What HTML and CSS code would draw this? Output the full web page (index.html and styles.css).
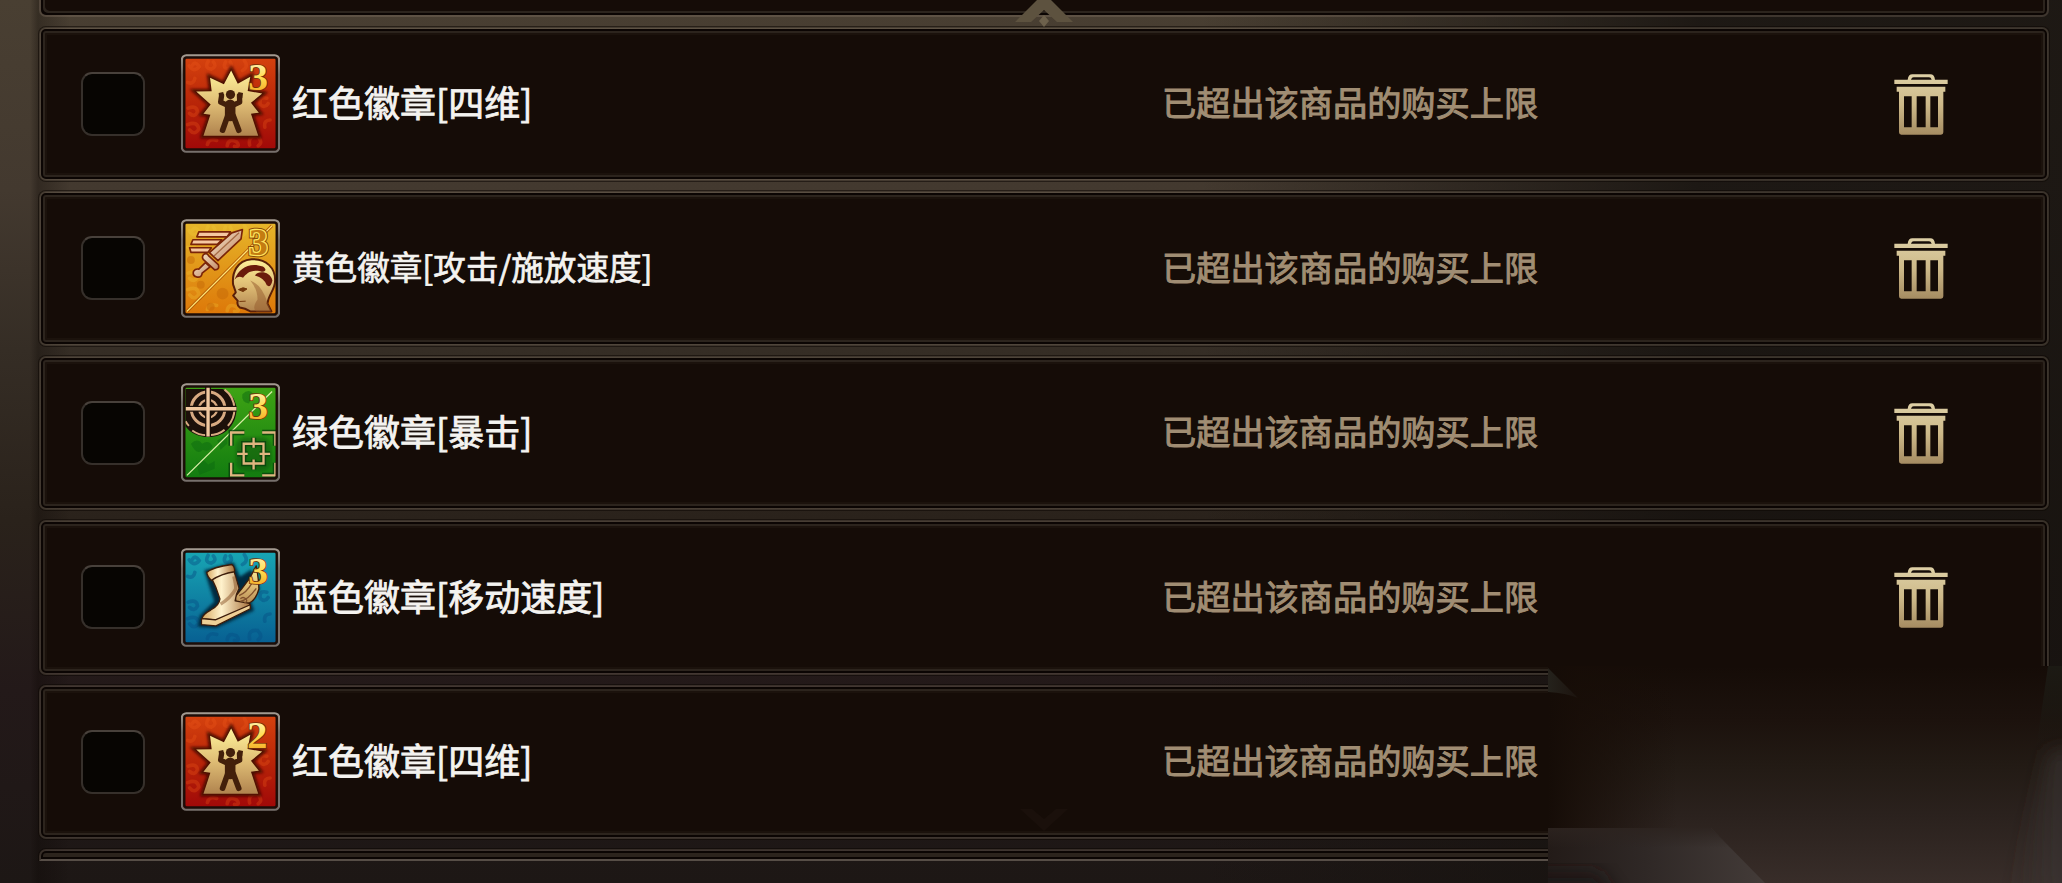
FILE: index.html
```html
<!DOCTYPE html>
<html lang="zh-CN">
<head>
<meta charset="utf-8">
<title>购物车</title>
<link rel="stylesheet" href="styles.css">
</head>
<body>
<svg class="defs" width="0" height="0" aria-hidden="true">
  <defs>
    <linearGradient id="gold" x1="0" y1="0" x2="0" y2="1"><stop offset="0" stop-color="#fff29a"/><stop offset=".5" stop-color="#dfbd75"/><stop offset="1" stop-color="#b0834e"/></linearGradient>
    <linearGradient id="digit" x1="0" y1="0" x2="0" y2="1"><stop offset="0" stop-color="#fff8d0"/><stop offset=".5" stop-color="#ffdc50"/><stop offset="1" stop-color="#f09a18"/></linearGradient>
    <linearGradient id="red" x1="0" y1="0" x2="0" y2="1"><stop offset="0" stop-color="#d5420e"/><stop offset=".5" stop-color="#b82508"/><stop offset="1" stop-color="#a00808"/></linearGradient>
    <linearGradient id="yellow" x1="0" y1="0" x2="0" y2="1"><stop offset="0" stop-color="#e6b62a"/><stop offset="1" stop-color="#dd7708"/></linearGradient>
    <linearGradient id="green" x1="0" y1="0" x2="0" y2="1"><stop offset="0" stop-color="#3fa414"/><stop offset="1" stop-color="#127c10"/></linearGradient>
    <linearGradient id="blue" x1="0" y1="0" x2="0" y2="1"><stop offset="0" stop-color="#18a6b4"/><stop offset="1" stop-color="#075f92"/></linearGradient>
    <linearGradient id="steel" x1="0" y1="0" x2="1" y2="1"><stop offset="0" stop-color="#fff3dc"/><stop offset="1" stop-color="#b87850"/></linearGradient>
    <linearGradient id="boot" x1="0" y1="0" x2="1" y2="0"><stop offset="0" stop-color="#d8a860"/><stop offset=".4" stop-color="#fff2cc"/><stop offset="1" stop-color="#a8713c"/></linearGradient>
    <linearGradient id="bin" x1="0" y1="0" x2="0" y2="1"><stop offset="0" stop-color="#ded0a6"/><stop offset=".5" stop-color="#cdb989"/><stop offset="1" stop-color="#a58c62"/></linearGradient>
    <linearGradient id="rim" x1="0" y1="0" x2="0" y2="1"><stop offset="0" stop-color="#a39a90"/><stop offset=".2" stop-color="#6d6762"/><stop offset="1" stop-color="#77706c"/></linearGradient>
    <filter id="soft" x="-20%" y="-20%" width="140%" height="140%"><feGaussianBlur stdDeviation="5"/></filter>

    <g id="swirls" fill="none" stroke-width="11" stroke-linecap="round">
      <path d="M55 62q14 22 30 2q-12-18-20-4M112 48q-12 22 10 24q18-8 6-22M165 50q-10 20 8 20q16-6 6-20M222 46q14 20-6 30M50 112q18 8 22-12M290 160q-24-6-20 18q14 14 24-2M52 190q26-10 28 12q-10 18-24 4M50 240q30-12 34 14q-14 20-28 2M110 300q6-20 28-12M170 304q4-24 28-12q14 16-6 14M238 302q-6-30 24-26q18 18 2 28M300 226q-20 0-16 22"/>
    </g>
    <g id="frame">
      <rect x="33" y="30" width="294" height="292" rx="13" fill="none" stroke="url(#rim)" stroke-width="7"/>
      <rect x="40" y="37" width="280" height="278" rx="7" fill="none" stroke="#1c0d08" stroke-width="7"/>
    </g>
    <g id="burst">
      <rect x="38" y="35" width="284" height="282" fill="url(#red)"/>
      <use href="#swirls" stroke="#ef5a1c" opacity=".3"/>
      <path d="M182 76L202 116L240 95L232 138L276 146L242 174L266 204L242 207L264 274H98L119 210L98 207L120 179L76 140L123 139L118 98L160 118Z" fill="#4a0802" stroke="#4a0802" stroke-width="16" filter="url(#soft)"/>
      <path d="M182 76L202 116L240 95L232 138L276 146L242 174L266 204L242 207L264 274H98L119 210L98 207L120 179L76 140L123 139L118 98L160 118Z" fill="url(#gold)"/>
      <g fill="none" stroke="#43200b" stroke-linecap="round" stroke-linejoin="round">
        <path d="M153 152L150 172L168 180M207 152L208 172L190 180" stroke-width="16"/>
        <path d="M179 180V214" stroke-width="32"/>
        <path d="M172 212L156 257M188 212L205 257" stroke-width="17"/>
      </g>
      <circle cx="180" cy="149" r="14" fill="#43200b"/>
      <path d="M144 144l14-3 2 16-14 3zM218 144l-14-3-2 16 14 3z" fill="#43200b"/>
    </g>
    <g id="trash">
      <path d="M203 240q2-16 14-16h54q12 0 14 16h-10q-2-7-8-7h-46q-6 0-8 7zM163 240h160v13H163zM170 261h146v15h-6v122q0 7-7 7H184q-7 0-7-7V276h-7zM192 290v93h23v-93zM230 290v93h27v-93zM271 290v93h23v-93z" fill="url(#bin)" fill-rule="evenodd"/>
    </g>
  </defs>
</svg>

<main class="screen">
  <section class="list">
    <article class="row row-cut"></article>

    <article class="row">
      <span class="check"></span>
      <svg class="badge" viewBox="30 27 300 298">
        <use href="#burst"/>
        <text class="num" x="234" y="136" textLength="60" lengthAdjust="spacingAndGlyphs">3</text>
        <use href="#frame"/>
      </svg>
      <h2 class="name">红色徽章[四维]</h2>
      <p class="note">已超出该商品的购买上限</p>
      <svg class="trash" viewBox="163 223 160 183"><use href="#trash"/></svg>
    </article>

    <article class="row">
      <span class="check"></span>
      <svg class="badge" viewBox="30 27 300 298">
        <rect x="38" y="35" width="284" height="282" fill="url(#yellow)"/>
        <use href="#swirls" stroke="#f5cf3c" opacity=".25"/>
        <g fill="#c66a08" opacity=".5"><circle cx="156" cy="252" r="18"/><circle cx="90" cy="225" r="12"/><circle cx="60" cy="150" r="12"/><circle cx="120" cy="292" r="12"/></g>
        <path d="M48 306L306 46" stroke="#b45a05" stroke-width="9"/>
        <path d="M48 306L306 46" stroke="#ffe878" stroke-width="4"/>
        <g stroke="#7a2408" stroke-width="5" stroke-linejoin="round">
          <path d="M84 65H180L170 80H78ZM66 89H154L140 103H60ZM56 113H122L112 127H60Z" fill="#f6c7a0"/>
          <path d="M216 58L212 86L142 152L116 128L184 68Z" fill="url(#steel)"/>
          <path d="M98 134Q108 126 114 138L143 164Q148 180 132 180L98 149Q92 142 98 134ZM104 158L118 171L94 190Q94 204 78 202Q64 198 68 184Q74 176 84 178Z" fill="url(#steel)"/>
        </g>
        <path d="M130 138L206 68" stroke="#a66a44" stroke-width="4"/>
        <path d="M188 225C184 190 198 152 244 148C290 146 316 176 315 212C316 240 296 252 292 282L304 306H240L224 298L208 294Q198 286 202 274L188 258L196 248Z" fill="url(#gold)" stroke="#5a2008" stroke-width="6" stroke-linejoin="round"/>
        <path d="M240 212Q276 226 292 280L304 306H258Q244 296 262 270Q262 238 240 212Z" fill="#935a2c" opacity=".5"/>
        <path d="M192 210C206 174 238 156 278 170C292 178 286 190 270 184C240 178 228 192 218 204Q202 196 192 210ZM254 197C264 182 300 184 307 212Q302 236 290 227Q282 204 254 197Z" fill="#6a1b0c"/>
        <path d="M204 240Q218 230 230 238L218 246ZM207 276L226 275" fill="#74380c" stroke="#74380c" stroke-width="3"/>
        <text class="num num-shade" x="236" y="134" textLength="57" lengthAdjust="spacingAndGlyphs">3</text>
        <text class="num num-hollow" x="236" y="134" textLength="57" lengthAdjust="spacingAndGlyphs" aria-hidden="true">3</text>
        <use href="#frame"/>
      </svg>
      <h2 class="name name-long">黄色徽章[攻击/施放速度]</h2>
      <p class="note">已超出该商品的购买上限</p>
      <svg class="trash" viewBox="163 223 160 183"><use href="#trash"/></svg>
    </article>

    <article class="row">
      <span class="check"></span>
      <svg class="badge" viewBox="30 27 300 298">
        <rect x="38" y="35" width="284" height="282" fill="url(#green)"/>
        <g fill="#0c6a10" opacity=".5"><path d="M60 210q20-20 34 0q20-14 32 8q-10 20-30 10q-18 20-36-18zM76 270q20-20 36 4l20-12v24l-46 18zM216 60q20-20 34 0l-14 28q-24-4-20-28zM140 200l30-20v30l-20 18z"/></g>
        <path d="M48 306L306 52" stroke="#dcefa8" stroke-width="4"/>
        <path d="M44 44H156C186 58 198 82 198 108C196 156 160 190 114 190C84 190 58 178 44 158Z" fill="#1c100a"/>
        <g fill="none" stroke="#d8aa82">
          <path d="M44 142Q48 150 54 156M172 156Q192 134 192 104Q190 66 162 46M64 170Q86 186 114 184Q144 184 162 168" stroke-width="6"/>
          <circle cx="112" cy="104" r="51" stroke-width="9"/>
          <circle cx="112" cy="104" r="27" stroke-width="7"/>
          <path d="M112 38V188M44 104H198" stroke="#1c100a" stroke-width="18"/>
          <path d="M112 38V188M44 104H198" stroke="#f0c8a0" stroke-width="10"/>
        </g>
        <rect x="196" y="190" width="108" height="102" rx="30" fill="#07400b" opacity=".35" filter="url(#soft)"/>
        <g fill="none" stroke="#07400b" stroke-width="16" opacity=".8"><path d="M182 216V176H222M276 176H316V216M182 268V306H222M276 306H316V268M220 210H280V270H220ZM250 192V222M250 258V288M200 241H232M268 241H300"/></g>
        <g fill="none" stroke="#e0b680" stroke-width="7"><path d="M182 216V176H222M276 176H316V216M182 268V306H222M276 306H316V268M220 210H280V270H220ZM250 192V222M250 258V288M200 241H232M268 241H300"/></g>
        <text class="num" x="234" y="134" textLength="60" lengthAdjust="spacingAndGlyphs">3</text>
        <use href="#frame"/>
      </svg>
      <h2 class="name">绿色徽章[暴击]</h2>
      <p class="note">已超出该商品的购买上限</p>
      <svg class="trash" viewBox="163 223 160 183"><use href="#trash"/></svg>
    </article>

    <article class="row">
      <span class="check"></span>
      <svg class="badge" viewBox="30 27 300 298">
        <rect x="38" y="35" width="284" height="282" fill="url(#blue)"/>
        <use href="#swirls" stroke="#064f86" opacity=".45"/>
        <path d="M108 98L186 76L206 122L240 100L262 150L236 190L244 212L136 262L88 260L92 234L138 190Z" fill="#052c40" stroke="#052c40" stroke-width="12" filter="url(#soft)"/>
        <g stroke="#3c1c0a" stroke-width="4" stroke-linejoin="round">
          <path d="M194 174L214 150L238 118L258 80Q266 124 266 150Q258 182 238 192L200 204Z" fill="url(#gold)"/>
          <path d="M120 112L190 94Q198 122 206 148Q196 166 194 186L238 194L240 206L140 244L94 240Q96 226 120 214Q146 200 148 180Q138 146 120 112Z" fill="url(#boot)"/>
          <path d="M92 240L134 244L240 198V210L136 262L92 258Z" fill="#efd096"/>
          <path d="M108 100Q126 84 184 76Q194 84 192 98Q152 104 122 124Q110 114 108 100Z" fill="url(#boot)"/>
        </g>
        <path d="M206 170Q228 162 244 134M210 188Q234 182 258 148M210 180q8-8 16 0t-4 12" stroke="#80502c" stroke-width="4" fill="none"/>
        <path d="M190 112Q196 136 196 150Q180 178 150 196" stroke="#8a5428" stroke-width="10" fill="none" opacity=".5"/>
        <text class="num" x="234" y="134" textLength="60" lengthAdjust="spacingAndGlyphs">3</text>
        <use href="#frame"/>
      </svg>
      <h2 class="name">蓝色徽章[移动速度]</h2>
      <p class="note">已超出该商品的购买上限</p>
      <svg class="trash" viewBox="163 223 160 183"><use href="#trash"/></svg>
    </article>

    <article class="row">
      <span class="check"></span>
      <svg class="badge" viewBox="30 27 300 298">
        <use href="#burst"/>
        <text class="num" x="230" y="136" textLength="62" lengthAdjust="spacingAndGlyphs">2</text>
        <use href="#frame"/>
      </svg>
      <h2 class="name">红色徽章[四维]</h2>
      <p class="note">已超出该商品的购买上限</p>
    </article>

    <article class="row row-last"></article>
  </section>

  <svg class="arrow" viewBox="0 0 60 30"><path d="M1 22L23 0H37L59 22H43L30 10L17 22Z" fill="#5d523f"/><path d="M30 15L35 21L30 27L25 21Z" fill="#6d614c"/></svg>
  <svg class="arrow arrow-down" viewBox="0 0 60 30"><path d="M6 4L30 26L54 4H42L30 14L18 4Z" fill="#1a100b"/></svg>

  <svg class="haze" viewBox="0 0 514 223" preserveAspectRatio="none">
    <defs>
      <linearGradient id="fade" x1="0" y1="0" x2="0" y2="1"><stop offset="0" stop-color="#150c07"/><stop offset=".25" stop-color="#1c120d"/><stop offset=".45" stop-color="#221a14"/><stop offset=".7" stop-color="#2b221e"/><stop offset="1" stop-color="#382d29"/></linearGradient>
      <linearGradient id="left" x1="0" y1="0" x2="1" y2="0"><stop offset="0" stop-color="#150c07"/><stop offset=".25" stop-color="#170d07" stop-opacity=".75"/><stop offset="1" stop-color="#170d07" stop-opacity="0"/></linearGradient>
      <linearGradient id="side" x1="0" y1="0" x2="1" y2="0"><stop offset="0" stop-color="#3a3534" stop-opacity="0"/><stop offset="1" stop-color="#3a3534" stop-opacity=".8"/></linearGradient>
      <linearGradient id="dim" x1="0" y1="0" x2="0" y2="1"><stop offset="0" stop-color="#1c1a14"/><stop offset=".5" stop-color="#1c1a14" stop-opacity=".6"/><stop offset="1" stop-color="#1c1a14" stop-opacity="0"/></linearGradient>
      <linearGradient id="wedge" x1="0" y1="0" x2="1" y2="0"><stop offset="0" stop-color="#231b18"/><stop offset=".45" stop-color="#2f2826"/><stop offset="1" stop-color="#433b38"/></linearGradient>
      <linearGradient id="wedgetop" x1="0" y1="0" x2="0" y2="1"><stop offset="0" stop-color="#2c231f" stop-opacity=".9"/><stop offset="1" stop-color="#2c231f" stop-opacity="0"/></linearGradient>
      <linearGradient id="tip" x1="0" y1="0" x2="1" y2="0"><stop offset="0" stop-color="#25221c"/><stop offset="1" stop-color="#1c130e"/></linearGradient>
      <filter id="blur" x="-30%" y="-30%" width="160%" height="160%"><feGaussianBlur stdDeviation="9"/></filter>
    </defs>
    <rect y="6" width="514" height="217" fill="url(#fade)"/>
    <rect y="6" width="130" height="217" fill="url(#left)"/>
    <path d="M500 90H530V240H460Z" fill="url(#side)" filter="url(#blur)"/>
    <path d="M500 6H514V90H488Z" fill="url(#dim)"/>
    <path d="M0 8L30 38Q18 33 0 32Z" fill="url(#tip)"/>
    <path d="M0 168H163L217 223H0Z" fill="url(#wedge)"/>
    <path d="M0 168H163L183 188H0Z" fill="url(#wedgetop)"/>
    <path d="M-20 212H50L70 240H-20Z" fill="#1f1917" opacity=".8" filter="url(#blur)"/>
  </svg>
</main>
</body>
</html>
```

FILE: styles.css
```css
* { box-sizing: border-box; }
body {
  margin: 0;
  background: #1c1614;
  font-family: "Noto Sans CJK SC", "Noto Sans", sans-serif;
}
.defs { position: absolute; }
.screen {
  position: relative;
  width: 2062px;
  height: 883px;
  overflow: hidden;
  background:
    linear-gradient(90deg, rgba(18, 12, 9, 0) 1200px, rgba(22, 18, 15, .85) 1700px),
    linear-gradient(90deg, rgba(10, 5, 2, 0) 30px, rgba(10, 5, 2, .3) 38px, rgba(10, 5, 2, 0) 70px),
    linear-gradient(180deg, #493f32 0, #43392f 190px, #352d25 350px, #2a221b 520px, #231919 690px, #1d1715 883px);
}
.list {
  display: flex;
  flex-direction: column;
  gap: 10px;
  height: 861px;
  padding: 0 13px 0 39px;
  overflow: hidden;
}
.row {
  flex: none;
  display: flex;
  align-items: center;
  height: 154.5px;
  padding-left: 42px;
  border: 2px solid rgba(150, 135, 120, .27);
  border-radius: 7px;
  background: #150c07 padding-box;
  box-shadow: 0 0 0 1px rgba(12, 7, 4, .55), inset 0 0 0 2px #0b0503, inset 0 0 0 4px #2c241d, inset 0 0 0 6px #1b120c;
}
.row-cut {
  height: 16.5px;
  border-top: 0;
  border-radius: 0 0 7px 7px;
  box-shadow: inset 2px -2px 0 #0b0503, inset -2px 0 0 #0b0503, inset 4px -4px 0 #2c241d, inset -4px 0 0 #2c241d;
}
.row-last {
  height: 11.5px;
  border-bottom-color: #574e47;
  border-radius: 7px 7px 0 0;
}
.check {
  flex: none;
  width: 64px;
  height: 64px;
  margin-left: -2px;
  border: 2px solid #36302b;
  border-top-color: #48413b;
  border-radius: 11px;
  background: #070502;
}
.badge {
  flex: none;
  width: 99px;
  height: 99px;
  margin-left: 36px;
}
.num {
  font: bold 112px "Liberation Serif", serif;
  fill: url(#digit);
  stroke: #70300a;
  stroke-width: 5px;
  paint-order: stroke;
}
.num-shade {
  fill: #8a4a08;
  stroke: #8a4a08;
  stroke-width: 14px;
}
.num-hollow {
  fill: #c47c10;
  stroke: #ffe45c;
  stroke-width: 8px;
}
.name, .note {
  margin: 0;
  padding-bottom: 5px;
  white-space: nowrap;
  line-height: 50px;
  font-weight: 400;
}
.name {
  width: 870px;
  margin-left: 12px;
  font-size: 36px;
  color: #f4f3f0;
  -webkit-text-stroke: .8px #f4f3f0;
}
.name-long {
  font-size: 32.6px;
  -webkit-text-stroke-width: .7px;
}
.note {
  width: 732px;
  font-size: 34.2px;
  color: #a08d73;
  -webkit-text-stroke: 1px #a08d73;
}
.trash {
  flex: none;
  width: 54px;
  height: 61px;
  margin-top: 1px;
}
.arrow {
  position: absolute;
  left: 1014px;
  top: 0;
  width: 60px;
  height: 30px;
}
.arrow-down { top: 805px; }
.haze {
  position: absolute;
  left: 1548px;
  top: 660px;
  width: 514px;
  height: 223px;
}
```
